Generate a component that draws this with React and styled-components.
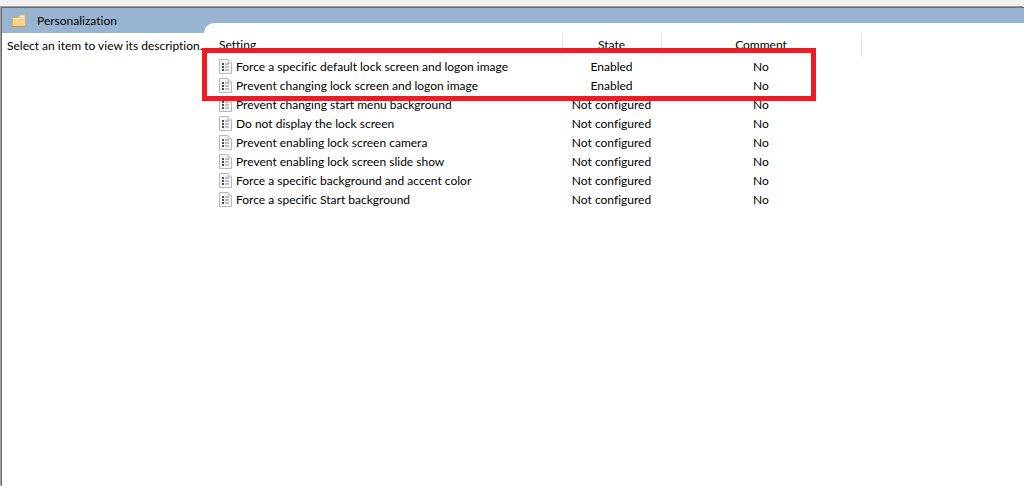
import React from 'react';
import styled, { createGlobalStyle } from 'styled-components';

const settings = [
  { name: 'Force a specific default lock screen and logon image', state: 'Enabled', comment: 'No' },
  { name: 'Prevent changing lock screen and logon image', state: 'Enabled', comment: 'No' },
  { name: 'Prevent changing start menu background', state: 'Not configured', comment: 'No' },
  { name: 'Do not display the lock screen', state: 'Not configured', comment: 'No' },
  { name: 'Prevent enabling lock screen camera', state: 'Not configured', comment: 'No' },
  { name: 'Prevent enabling lock screen slide show', state: 'Not configured', comment: 'No' },
  { name: 'Force a specific background and accent color', state: 'Not configured', comment: 'No' },
  { name: 'Force a specific Start background', state: 'Not configured', comment: 'No' },
];

const FolderIcon = () => (
  <svg width="16" height="16" viewBox="0 0 16 16" aria-hidden="true">
    <path d="M1 4h6l1.5-2.5H14.5V14H1z" fill="#e0b062" />
    <path d="M9 2.5h4.5v1.5h-4.5z" fill="#fff6dc" />
    <path d="M2 5h5.5l1.5-0.5H14v9H2z" fill="#f9d48b" />
    <path d="M2 5h5.5l1.5-0.5h5v1H9l-1.500 0.500H2z" fill="#fdebbd" />
    <path d="M1 13.5h13.5" stroke="#c99343" />
  </svg>
);

const PolicyIcon = () => (
  <svg width="13" height="15" viewBox="0 0 13 15" aria-hidden="true">
    <path d="M0.5 0.5h8.5l3.5 3.5v10.5h-12z" fill="#f6f6f6" stroke="#b8b8b8" />
    <path d="M9 0.5v3.5h3.5" fill="#e4e4e4" stroke="#c4c4c4" />
    <path d="M3 4h2v2H3zM3 7h2v2H3zM3 10h2v2H3z" fill="#4b4b57" />
    <path d="M6 5h4M6 8h4M6 11h4" stroke="#8a8a94" />
  </svg>
);

const App = () => {
  return (
    <>
      <GlobalStyle />
      <Frame>
        <Sidebar>
          <Title>
            <FolderIcon />
            Personalization
          </Title>
          <Description>Select an item to view its description.</Description>
        </Sidebar>
        <Content>
          <Panel>
            <Highlight />
            <Table>
              <colgroup>
                <col width="358" />
                <col width="99" />
                <col width="200" />
                <col />
              </colgroup>
              <thead>
                <tr>
                  <HeadCell scope="col">Setting</HeadCell>
                  <HeadCell scope="col" $center>State</HeadCell>
                  <HeadCell scope="col" $center>Comment</HeadCell>
                  <td />
                </tr>
              </thead>
              <tbody>
                {settings.map((item) => (
                  <tr key={item.name}>
                    <Cell>
                      <Name>
                        <PolicyIcon />
                        {item.name}
                      </Name>
                    </Cell>
                    <Cell $center>{item.state}</Cell>
                    <Cell $center>{item.comment}</Cell>
                    <td />
                  </tr>
                ))}
              </tbody>
            </Table>
          </Panel>
        </Content>
      </Frame>
    </>
  );
};

const GlobalStyle = createGlobalStyle`
  * {
    box-sizing: border-box;
  }

  body {
    margin: 0;
    padding: 7px 0 0 1px;
    background: #f0f0f0;
    color: #000;
    font-family: Lato, 'Open Sans', sans-serif;
    font-size: 12px;
    font-variant-ligatures: none;
    line-height: 19px;
  }
`;

const Frame = styled.main`
  display: grid;
  grid-template-columns: 202px 1fr;
  min-height: calc(100vh - 7px);
  border-top: 1px solid #696969;
  border-left: 1px solid #696969;
  box-shadow: -1px -1px 0 #a0a0a0;
  background: #fff;
`;

const Sidebar = styled.aside`
  white-space: nowrap;
`;

const Title = styled.h1`
  display: flex;
  align-items: center;
  gap: 10px;
  height: 25px;
  margin: 0;
  padding-left: 9px;
  background: #99b4d1;
  font-size: 12px;
  font-weight: 400;
`;

const Description = styled.p`
  margin: 0;
  padding: 3px 0 0 5px;
`;

const Content = styled.section`
  align-self: start;
  padding-top: 15px;
  background: linear-gradient(#99b4d1 25px, #fff 25px);
`;

const Panel = styled.div`
  position: relative;
  padding-top: 10px;
  border-top-left-radius: 10px;
  background: #fff;
`;

// red frame drawn over the enabled policies
const Highlight = styled.div`
  position: absolute;
  top: 25px;
  left: -2px;
  width: 614px;
  height: 53px;
  border: 5px solid #ed1c24;
`;

const Table = styled.table`
  width: 100%;
  table-layout: fixed;
  border-collapse: collapse;
  white-space: nowrap;
`;

const HeadCell = styled.th`
  height: 24px;
  padding: ${(props) => (props.$center ? '0 0 2px' : '0 0 2px 15px')};
  border-right: 1px solid #e5e5e5;
  font-weight: 400;
  text-align: ${(props) => (props.$center ? 'center' : 'left')};
`;

const Cell = styled.td`
  height: 19px;
  padding: ${(props) => (props.$center ? '0' : '0 0 0 15px')};
  text-align: ${(props) => (props.$center ? 'center' : 'left')};
`;

const Name = styled.span`
  display: flex;
  align-items: center;
  gap: 4px;
`;

export default App;
